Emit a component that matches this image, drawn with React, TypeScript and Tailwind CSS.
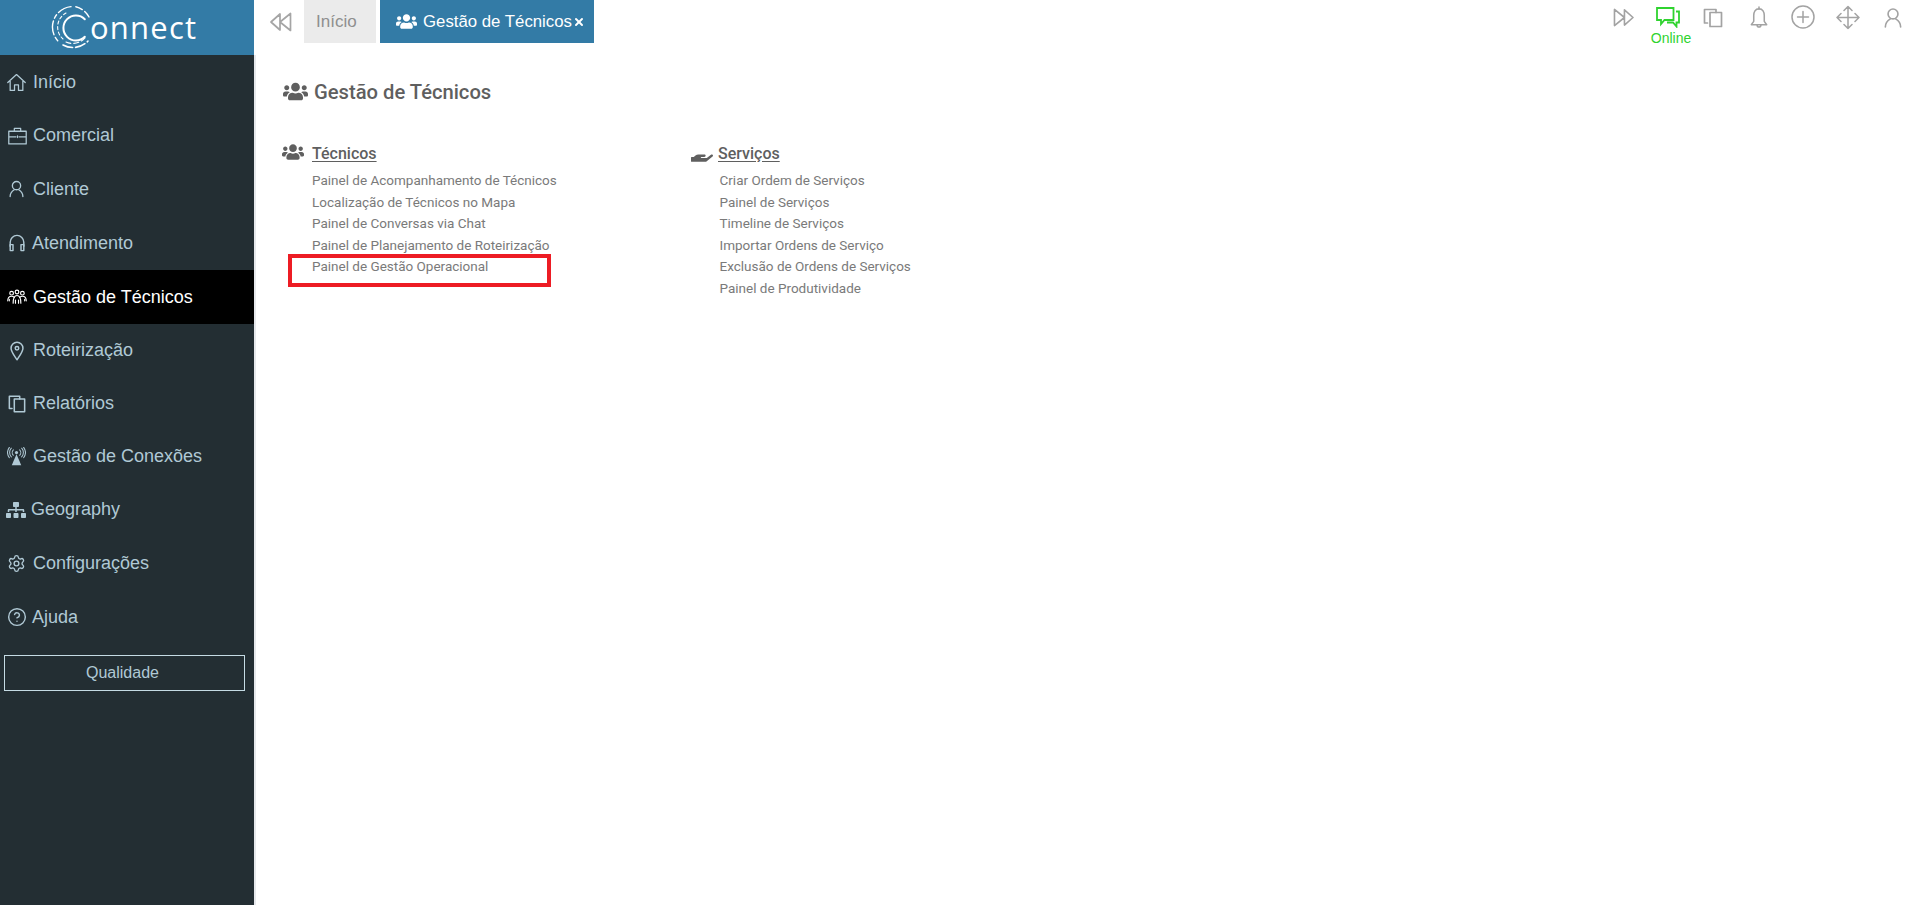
import React from 'react';
import { Settings, CircleHelp, X } from 'lucide-react';
import { FaUsers, FaSitemap, FaHandHolding } from 'react-icons/fa';

const sans = "font-['Liberation_Sans',Arial,sans-serif]";

type IconProps = { className?: string };

function Line({ className, box = '0 0 24 24', sw = 1.6, children }: IconProps & { box?: string; sw?: number; children: React.ReactNode }) {
  return (
    <svg viewBox={box} fill="none" stroke="currentColor" strokeWidth={sw} strokeLinejoin="round" strokeLinecap="round" className={className}>
      {children}
    </svg>
  );
}

function Logo() {
  return (
    <svg width="44" height="46" viewBox="0 0 44 46" fill="none" stroke="#fff" strokeLinecap="round" className="shrink-0">
      <path d="M33.8 14.2 A12.5 12.5 0 1 0 33.8 31.8" strokeWidth="2" />
      <path d="M15 8 A16 16 0 0 0 12 34" strokeWidth="1.1" strokeDasharray="3 2.5" />
      <path d="M15 37 A16.5 16.5 0 0 0 34 33" strokeWidth="1.1" strokeDasharray="5 3" />
      <path d="M38 12 A20.5 20.5 0 0 0 24 1.6" strokeWidth="1.4" strokeDasharray="7 3" />
      <path d="M20 1.6 A20.5 20.5 0 0 0 8 37" strokeWidth="1.4" strokeDasharray="14 3 4 3" />
      <path d="M12 40 A20.5 20.5 0 0 0 37 36" strokeWidth="1.6" strokeDasharray="10 3" />
    </svg>
  );
}

const HomeIcon = ({ className }: IconProps) => (
  <Line className={className}>
    <path d="M1 12 L12 2 L23 12 M4 10 V22 H9.5 V15 H14.5 V22 H20 V10" />
  </Line>
);

const CaseIcon = ({ className }: IconProps) => (
  <Line className={className} box="0 0 24 22">
    <path d="M1 5 H23 V21 H1 Z M1 12 H10 M14 12 H23 M8 5 V1.5 H16 V5 M12 11 V13" />
  </Line>
);

const UserIcon = ({ className }: IconProps) => (
  <Line className={className} box="0 0 20 22" sw={1.8}>
    <ellipse cx="10" cy="6.5" rx="5.5" ry="5.5" />
    <path d="M1.5 21 C1.5 15.5 4.5 13.5 7 12 M18.5 21 C18.5 15.5 15.5 13.5 13 12" />
  </Line>
);

const PhonesIcon = ({ className }: IconProps) => (
  <Line className={className} box="0 0 20 22" sw={1.8}>
    <path d="M1.5 15 V10 A8.5 8.5 0 0 1 18.5 10 V15" />
    <path d="M1.5 13 H5 V20.5 H1.5 Z M15 13 H18.5 V20.5 H15 Z" />
  </Line>
);

const TeamIcon = ({ className }: IconProps) => (
  <Line className={className} box="0 0 26 20" sw={1.5}>
    <circle cx="6" cy="5" r="2.4" />
    <circle cx="13" cy="3.5" r="2.4" />
    <circle cx="20" cy="5" r="2.4" />
    <path d="M1 15 C1 10 4 9 6 9 C7.5 9 8.5 9.5 9.5 10.5 M25 15 C25 10 22 9 20 9 C18.5 9 17.5 9.5 16.5 10.5" />
    <path d="M8 18 C8 11 10.5 8 13 8 C15.5 8 18 11 18 18" />
    <path d="M3 15 V13 M23 15 V13 M11 18 V14 M15 18 V14" />
  </Line>
);

const PinIcon = ({ className }: IconProps) => (
  <Line className={className} box="0 0 16 22" sw={1.7}>
    <path d="M8 21 C4 15 1.2 11.5 1.2 7.8 A6.8 6.8 0 0 1 14.8 7.8 C14.8 11.5 12 15 8 21 Z" />
    <circle cx="8" cy="7.8" r="2" />
  </Line>
);

const DocsIcon = ({ className }: IconProps) => (
  <Line className={className} box="0 0 20 20" sw={1.7}>
    <path d="M4.5 15 H1.5 V1.5 H13 V4.5" />
    <path d="M7 4.5 H18.5 V18.5 H7 Z" />
  </Line>
);

const AntennaIcon = ({ className }: IconProps) => (
  <svg viewBox="0 0 24 24" fill="none" stroke="currentColor" strokeWidth="1.3" strokeLinecap="round" className={className}>
    <path d="M12 9 L18 23 H6 Z" fill="currentColor" stroke="none" />
    <circle cx="12" cy="7" r="2" fill="currentColor" stroke="none" />
    <path d="M8 3.5 A5 5 0 0 0 8 10.5 M16 3.5 A5 5 0 0 1 16 10.5" />
    <path d="M5.5 1.5 A8 8 0 0 0 5.5 12.5 M18.5 1.5 A8 8 0 0 1 18.5 12.5" />
    <path d="M3 0.5 A11 11 0 0 0 3 13.5 M21 0.5 A11 11 0 0 1 21 13.5" />
  </svg>
);

const BackIcon = ({ className }: IconProps) => (
  <Line className={className} box="0 0 22 20" sw={1.7}>
    <path d="M20.5 1.5 V18.5 L10 10 Z M10 2 V18 L1 10 Z" />
  </Line>
);

const ForwardIcon = ({ className }: IconProps) => (
  <Line className={className} box="0 0 22 20" sw={1.7}>
    <path d="M1.5 1.5 V18.5 L12 10 Z M12 2 V18 L21 10 Z" />
  </Line>
);

const ChatIcon = ({ className }: IconProps) => (
  <svg viewBox="0 0 24 21" fill="none" stroke="currentColor" strokeWidth="1.8" className={className}>
    <path d="M1 1 H17.5 V13 H8.5 L5 17 V13 H1 Z" />
    <path d="M20 4.5 H23 V15.5 H20.5 V19.5 L17 15.5 H11" />
  </svg>
);

const BellIcon = ({ className }: IconProps) => (
  <Line className={className} box="0 0 18 24" sw={1.6}>
    <path d="M9 3 C5 3 3.5 6.5 3.5 10 V16 L1 19.5 H17 L14.5 16 V10 C14.5 6.5 13 3 9 3 Z" />
    <path d="M9 1 V3 M7 19.5 A2 2.5 0 0 0 11 19.5" />
  </Line>
);

const PlusIcon = ({ className }: IconProps) => (
  <Line className={className} sw={1.5}>
    <circle cx="12" cy="12" r="11" />
    <path d="M12 6.5 V17.5 M6.5 12 H17.5" />
  </Line>
);

const MoveIcon = ({ className }: IconProps) => (
  <Line className={className} sw={1.5}>
    <path d="M12 1 V23 M1 12 H23 M8 5 L12 1 L16 5 M8 19 L12 23 L16 19 M5 8 L1 12 L5 16 M19 8 L23 12 L19 16" />
  </Line>
);

const menu = [
  { label: 'Início', icon: <HomeIcon className="w-[19px] h-[19px]" />, h: 'h-[54px]', gap: 'gap-[7px]', pl: 'pl-[7px]' },
  { label: 'Comercial', icon: <CaseIcon className="w-[19px] h-[18px]" />, h: 'h-[53px]', gap: 'gap-[6px]', pl: 'pl-[8px]' },
  { label: 'Cliente', icon: <UserIcon className="w-[15px] h-[18px]" />, h: 'h-[54px]', gap: 'gap-[9px]', pl: 'pl-[9px]' },
  { label: 'Atendimento', icon: <PhonesIcon className="w-[16px] h-[18px]" />, h: 'h-[54px]', gap: 'gap-[7px]', pl: 'pl-[9px]' },
  { label: 'Gestão de Técnicos', icon: <TeamIcon className="w-[20px] h-[16px]" />, h: 'h-[54px]', gap: 'gap-[6px]', pl: 'pl-[7px]', active: true },
  { label: 'Roteirização', icon: <PinIcon className="w-[14px] h-[20px]" />, h: 'h-[53px]', gap: 'gap-[9px]', pl: 'pl-[10px]' },
  { label: 'Relatórios', icon: <DocsIcon className="w-[18px] h-[18px]" />, h: 'h-[53px]', gap: 'gap-[7px]', pl: 'pl-[8px]' },
  { label: 'Gestão de Conexões', icon: <AntennaIcon className="w-[19px] h-[19px]" />, h: 'h-[53px]', gap: 'gap-[7px]', pl: 'pl-[7px]' },
  { label: 'Geography', icon: <FaSitemap size={20} />, h: 'h-[53px]', gap: 'gap-[5px]', pl: 'pl-[6px]' },
  { label: 'Configurações', icon: <Settings size={19} strokeWidth={1.7} />, h: 'h-[54px]', gap: 'gap-[7px]', pl: 'pl-[7px]' },
  { label: 'Ajuda', icon: <CircleHelp size={20} strokeWidth={1.7} />, h: 'h-[54px]', gap: 'gap-[5px]', pl: 'pl-[7px]' },
];

const tecnicos = [
  'Painel de Acompanhamento de Técnicos',
  'Localização de Técnicos no Mapa',
  'Painel de Conversas via Chat',
  'Painel de Planejamento de Roteirização',
  'Painel de Gestão Operacional',
];

const servicos = [
  'Criar Ordem de Serviços',
  'Painel de Serviços',
  'Timeline de Serviços',
  'Importar Ordens de Serviço',
  'Exclusão de Ordens de Serviços',
  'Painel de Produtividade',
];

function Sidebar() {
  return (
    <aside className={`w-[256px] shrink-0 flex flex-col ${sans}`}>
      <div className="w-[254px] h-[55px] bg-[#337ba6] flex items-center pl-[51px] text-white">
        <Logo />
        <span className="text-[31px] tracking-[1.2px] leading-none -ml-[5px] font-['Open_Sans',sans-serif]">onnect</span>
      </div>
      <div className="flex-1 bg-[#232e33] border-r-2 border-[#e6e8ec]">
        {menu.map((m) => (
          <div
            key={m.label}
            className={`flex items-center ${m.h} ${m.gap} ${m.pl} text-[18px] ${m.active ? 'bg-black text-white' : 'text-[#b0c9d5]'}`}
          >
            {m.icon}
            <span>{m.label}</span>
          </div>
        ))}
        <div className="ml-[4px] mr-[9px] mt-[11px] h-[36px] pr-[4px] border border-[#c5dbe4] flex items-center justify-center text-[16px] text-[#b0c9d5]">
          Qualidade
        </div>
      </div>
    </aside>
  );
}

function TopBar() {
  return (
    <div className="h-[43px] flex items-start">
      <div className="w-[48px] h-full flex items-center justify-center pl-[2px] text-[#a5a5a5]">
        <BackIcon className="w-[22px] h-[20px]" />
      </div>
      <div className={`w-[72px] h-full bg-[#ebebeb] flex items-center pl-[12px] text-[17px] text-[#8f8f8f] ${sans}`}>Início</div>
      <div className={`ml-[4px] w-[214px] h-full bg-[#337ba6] flex items-center pl-[16px] text-white text-[16.8px] ${sans}`}>
        <FaUsers size={21} className="mr-[6px]" />
        <span>Gestão de Técnicos</span>
        <X size={12} strokeWidth={4} className="ml-[1px]" />
      </div>
      <div className="ml-auto flex items-start text-[#a3a3a3] pr-[11px]">
        <ForwardIcon className="w-[21px] h-[19px] mt-[8px]" />
        <div className={`ml-[17px] w-[40px] flex flex-col items-center text-[#2fd32f] text-[14px] leading-[16px] ${sans}`}>
          <ChatIcon className="w-[24px] h-[21px] mt-[7px] mr-[6px]" />
          <span className="mt-[2px]">Online</span>
        </div>
        <DocsIcon className="w-[20px] h-[20px] mt-[8px] ml-[12px]" />
        <BellIcon className="w-[18px] h-[23px] mt-[6px] ml-[27px]" />
        <PlusIcon className="w-[24px] h-[24px] mt-[5px] ml-[23px]" />
        <MoveIcon className="w-[24px] h-[25px] mt-[5px] ml-[21px]" />
        <UserIcon className="w-[18px] h-[20px] mt-[8px] ml-[24px]" />
      </div>
    </div>
  );
}

function Column({ title, icon, items, className, listClass = '' }: { title: string; icon: React.ReactNode; items: string[]; className: string; listClass?: string }) {
  return (
    <div className={className}>
      <div className="h-[24px] flex items-center text-[#5f5f5f] relative">
        <span className="absolute -left-[30px] -top-[2px] h-[24px] flex items-center">{icon}</span>
        <span className="text-[16px] font-medium underline underline-offset-2">{title}</span>
      </div>
      <ul className={`mt-[4px] text-[13.5px] leading-[21.5px] text-[#7a7a7a] ${listClass}`}>
        {items.map((t) => (
          <li key={t}>{t}</li>
        ))}
      </ul>
    </div>
  );
}

export default function App() {
  return (
    <div className="flex w-[1913px] h-[905px] overflow-hidden bg-white">
      <Sidebar />
      <main className="flex-1 min-w-0 font-['Roboto',sans-serif]">
        <TopBar />
        <div className="relative pl-[27px] pt-[36px]">
          <div className="flex items-center text-[#5f5f5f]">
            <FaUsers size={25} className="mr-[6px]" />
            <h1 className="text-[20.2px] leading-[24px] font-medium">Gestão de Técnicos</h1>
          </div>
          <div className="flex mt-[38px]">
            <Column title="Técnicos" icon={<FaUsers size={22} />} items={tecnicos} className="ml-[29px] w-[406px] pr-[20px]" />
            <Column title="Serviços" icon={<FaHandHolding size={22} className="ml-[3px]" />} items={servicos} className="" listClass="pl-[1.5px]" />
          </div>
          <div className="absolute left-[32px] top-[211px] w-[263px] h-[33px] border-4 border-[#ed1c24]" />
        </div>
      </main>
    </div>
  );
}
